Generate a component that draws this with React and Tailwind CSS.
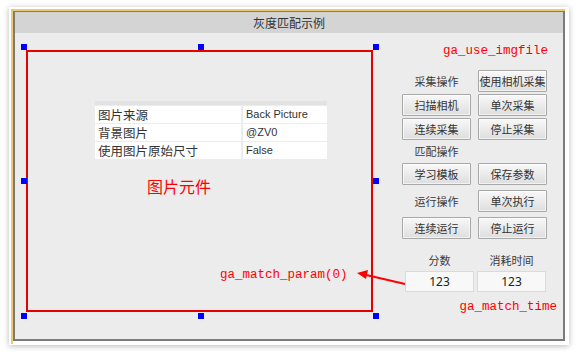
import React from 'react';

const cjk = { fontFamily: '"Noto Sans CJK SC", "Noto Sans", sans-serif' };

const Handle = ({ className }) => (
    <div className={`absolute w-[6px] h-[6px] bg-[#0000ff] ${className}`}></div>
);

const Btn = ({ children }) => (
    <div className="h-[22px] flex items-center justify-center text-[11px] text-[#333] border border-[#a8a8a8] rounded-[1px] bg-gradient-to-b from-[#f8f8f8] to-[#dedede] shadow-[inset_0_0_0_1px_rgba(255,255,255,0.6)]">
        {children}
    </div>
);

const Label = ({ children }) => (
    <div className="h-[22px] flex items-center justify-center text-[11px] text-[#3a3a3a]">{children}</div>
);

const rows = [
    ['图片来源', 'Back Picture'],
    ['背景图片', '@ZV0'],
    ['使用图片原始尺寸', 'False'],
];

export default function App() {
    return (
        <div className="relative w-[578px] h-[352px] bg-white overflow-hidden" style={cjk}>
            {/* window frame */}
            <div className="ml-[9px] mt-[7px] w-[560px] h-[338px] bg-white shadow-[0_1px_6px_rgba(0,0,0,0.28)] pt-[2px] pl-[2px]">
                <div className="w-[554px] h-[335px] border-l-2 border-t-2 border-[#ecca70]">
                    <div className="w-[552px] h-[330px] border-l-2 border-t border-r-2 border-b-2 border-[#7b7b7b] flex flex-col">
                        <div className="h-[21px] bg-[#d4d4d4] flex items-center justify-center text-[12px] text-[#333]">灰度匹配示例</div>

                        <div className="flex-1 bg-[#ececec] flex items-start">
                            {/* picture element */}
                            <div className="relative ml-[11px] mt-[17px] w-[347px] h-[262px] flex flex-col">
                                <div className="absolute inset-0 border-2 border-[#e60000]"></div>
                                <Handle className="left-[-5px] top-[-6px]" />
                                <Handle className="left-[172px] top-[-6px]" />
                                <Handle className="left-[347px] top-[-6px]" />
                                <Handle className="left-[-5px] top-[128px]" />
                                <Handle className="left-[347px] top-[128px]" />
                                <Handle className="left-[-5px] top-[263px]" />
                                <Handle className="left-[172px] top-[263px]" />
                                <Handle className="left-[347px] top-[263px]" />

                                <div className="ml-[69px] mt-[51px] w-[232px] flex flex-col gap-[1px]">
                                    <div className="h-[4px] bg-[#e2e2e2]"></div>
                                    {rows.map(([k, v]) => (
                                        <div key={k} className="flex gap-[2px] h-[17px]">
                                            <div className="w-[146px] bg-white pl-[3px] text-[12.5px] leading-[17px] text-[#333]">{k}</div>
                                            <div className="flex-1 bg-white pl-[3px] text-[11px] leading-[17px] text-[#333]" style={{ fontFamily: '"Liberation Sans", sans-serif' }}>{v}</div>
                                        </div>
                                    ))}
                                </div>

                                <div className="ml-[121px] mt-[17px] text-[16px] leading-[20px] text-[#ff0000]">图片元件</div>

                                <div className="ml-[194px] mt-[71px] text-[12.5px] leading-[16px] text-[#ff0000]" style={{ fontFamily: '"Liberation Mono", monospace' }}>ga_match_param(0)</div>
                            </div>

                            {/* right panel */}
                            <div className="ml-[29px] mt-[10px] w-[155px] flex flex-col">
                                <div className="self-end mr-[9px] h-[16px] text-[12.5px] leading-[16px] text-[#ff0000]" style={{ fontFamily: '"Liberation Mono", monospace' }}>ga_use_imgfile</div>

                                <div className="mt-[11px] grid grid-cols-[69px_69px] gap-x-[7px] gap-y-[2px]">
                                    <Label>采集操作</Label>
                                    <Btn>使用相机采集</Btn>
                                    <Btn>扫描相机</Btn>
                                    <Btn>单次采集</Btn>
                                    <Btn>连续采集</Btn>
                                    <Btn>停止采集</Btn>
                                    <div className="h-[19px] flex items-center justify-center text-[11px] text-[#3a3a3a]">匹配操作</div>
                                    <div></div>
                                    <Btn>学习模板</Btn>
                                    <Btn>保存参数</Btn>
                                </div>
                                <div className="mt-[5px] grid grid-cols-[69px_69px] gap-x-[7px] gap-y-[5px]">
                                    <Label>运行操作</Label>
                                    <Btn>单次执行</Btn>
                                    <Btn>连续运行</Btn>
                                    <Btn>停止运行</Btn>
                                </div>

                                <div className="mt-[13px] ml-[3px] grid grid-cols-[69px_69px] gap-x-[3px]">
                                    <div className="h-[16px] flex items-center justify-center text-[11px] text-[#3a3a3a]">分数</div>
                                    <div className="h-[16px] flex items-center justify-center text-[11px] text-[#3a3a3a]">消耗时间</div>
                                    <div className="mt-[3px] h-[21px] bg-[#f8f8f8] border border-[#dadada] flex items-center justify-center text-[12px] text-[#222]" style={{ fontFamily: '"Noto Sans", sans-serif' }}>123</div>
                                    <div className="mt-[3px] h-[21px] bg-[#f8f8f8] border border-[#dadada] flex items-center justify-center text-[12px] text-[#222]" style={{ fontFamily: '"Noto Sans", sans-serif' }}>123</div>
                                </div>

                                <div className="mt-[7px] self-end h-[16px] text-[12.5px] leading-[16px] text-[#ff0000]" style={{ fontFamily: '"Liberation Mono", monospace' }}>ga_match_time</div>
                            </div>
                        </div>
                    </div>
                </div>
            </div>

            {/* annotation arrow */}
            <svg className="absolute left-0 top-0" width="578" height="352" viewBox="0 0 578 352">
                <line x1="405" y1="284" x2="362" y2="274" stroke="#ff0000" strokeWidth="2" />
                <polygon points="357,273 368,270 366,279" fill="#ff0000" />
            </svg>
        </div>
    );
}
